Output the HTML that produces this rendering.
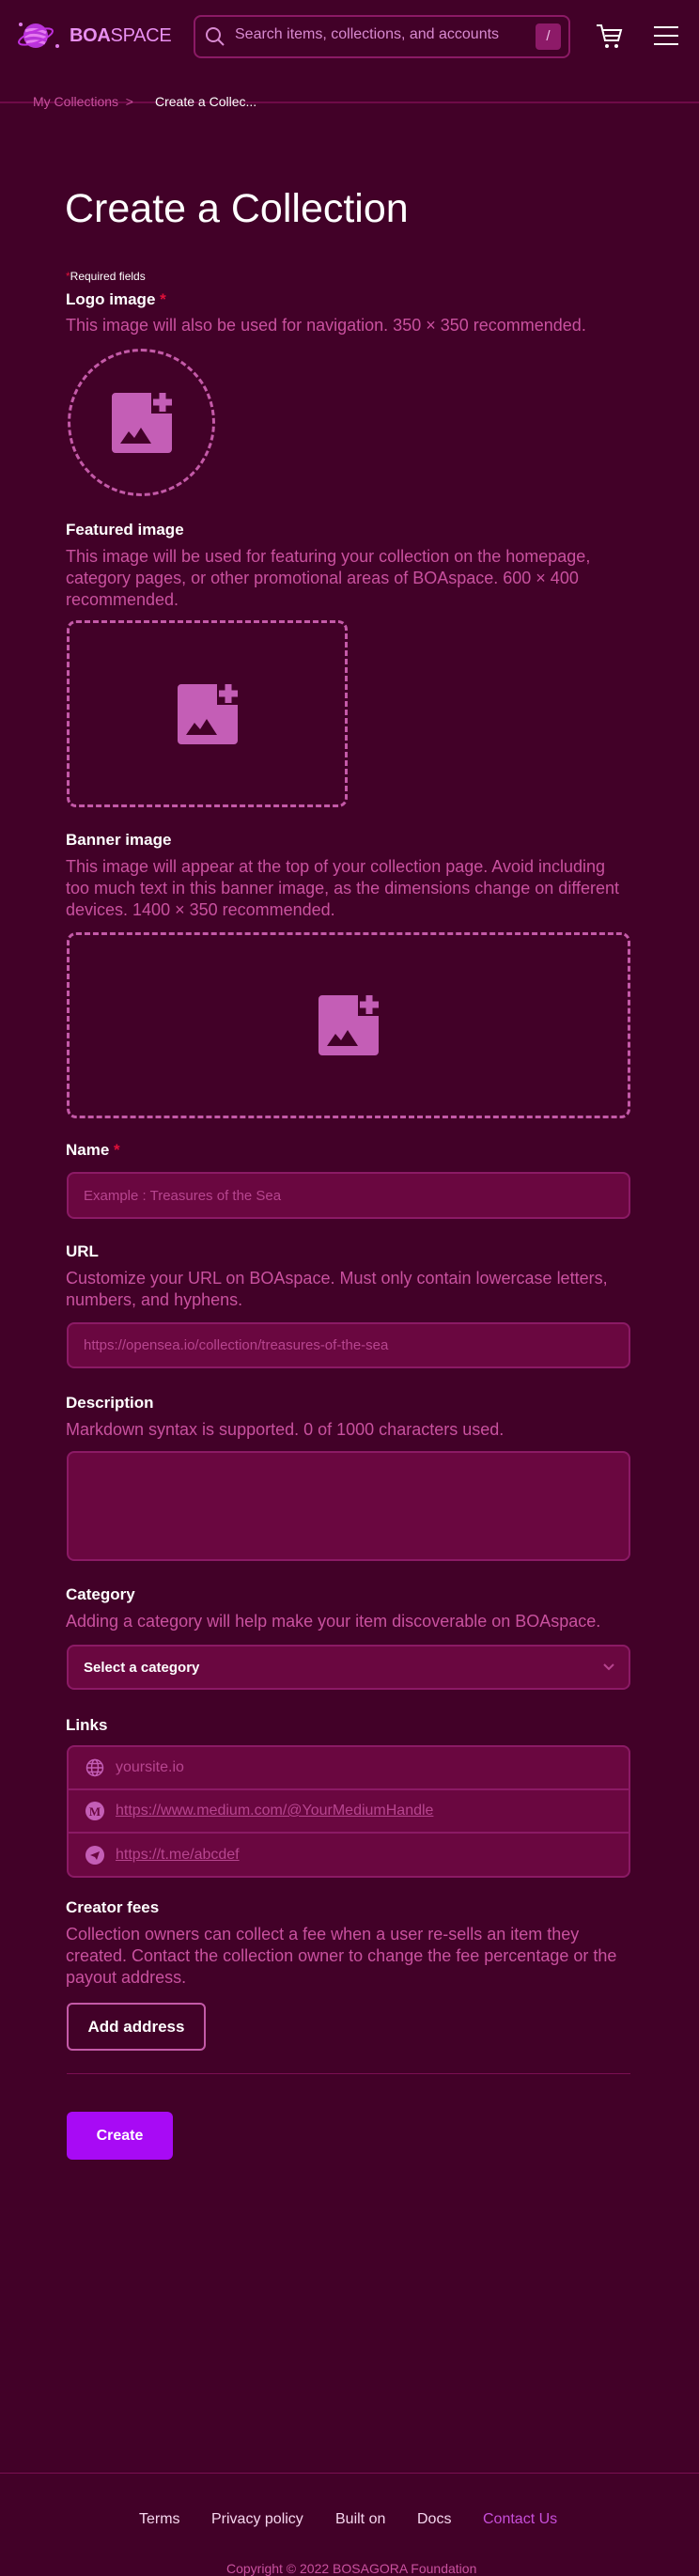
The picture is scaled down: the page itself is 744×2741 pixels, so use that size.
<!DOCTYPE html>
<html><head><meta charset="utf-8"><style>
*{box-sizing:border-box;margin:0;padding:0}
body{width:744px;height:2740px;background:#420128;font-family:"Liberation Sans",sans-serif;position:relative;overflow:hidden;color:#fff}
.a{position:absolute}
.lbl{position:absolute;left:70px;font-size:17px;font-weight:600;color:#fff;line-height:20px}
.lbl b{color:#e0103a;font-weight:600}
.desc{position:absolute;left:70px;font-size:18px;color:#c9519f;line-height:23px;white-space:nowrap}
.inp{position:absolute;left:71px;width:600px;background:#6a0740;border:2px solid #8b1a65;border-radius:8px;font-size:15px;color:#b7458f;padding-left:16px;display:flex;align-items:center}
.dash{position:absolute;border:3px dashed #c45aa8;border-radius:10px;display:flex;align-items:center;justify-content:center}
.row{height:46px;display:flex;align-items:center;border-bottom:2px solid #8b1a65;padding-left:18px;font-size:16px;color:#b7458f}
.row:last-child{border-bottom:none}
.row span{margin-left:12px}
.u{text-decoration:underline}
</style></head><body>
<div class="a" style="left:18px;top:22px;width:48px;height:32px">
<svg width="48" height="32" viewBox="0 0 48 32"><circle cx="20" cy="16" r="13" fill="#b835d8"/><path d="M9 11 q10 -4 22 2 M8 17 q12 -4 24 2 M10 23 q10 -3 20 1" stroke="#e67bf0" stroke-width="3" fill="none"/><ellipse cx="20" cy="17" rx="19" ry="6" fill="none" stroke="#c030e0" stroke-width="2" transform="rotate(-20 20 17)"/><circle cx="4" cy="4" r="2" fill="#e07be8"/><circle cx="43" cy="27" r="2" fill="#e07be8"/></svg></div>
<div class="a" style="left:74px;top:27px;font-size:20px;color:#e88ff0;letter-spacing:-0.3px"><b>BOA</b>SPACE</div>
<div class="a" style="left:206px;top:16px;width:401px;height:46px;border:2px solid #8b1a65;border-radius:8px"></div>
<svg class="a" style="left:218px;top:28px" width="22" height="22" viewBox="0 0 22 22"><circle cx="9" cy="9" r="7" stroke="#d88ad0" stroke-width="2" fill="none"/><path d="M14 14l6 6" stroke="#d88ad0" stroke-width="2"/></svg>
<div class="a" style="left:250px;top:28px;font-size:16px;color:#d88ad0">Search items, collections, and accounts</div>
<div class="a" style="left:570px;top:25px;width:27px;height:28px;background:#8d1a68;border-radius:4px;color:#f0c0e8;font-size:15px;text-align:center;line-height:28px">/</div>
<svg class="a" style="left:634px;top:24px" width="30" height="30" viewBox="0 0 30 30"><path d="M1 3h5l4 16h14l3-11H8" stroke="#fff" stroke-width="2" fill="none"/><path d="M10 14h15" stroke="#fff" stroke-width="2"/><circle cx="12" cy="25" r="2" fill="#fff"/><circle cx="22" cy="25" r="2" fill="#fff"/></svg>
<svg class="a" style="left:696px;top:27px" width="26" height="22"><path d="M0 2h26M0 11h26M0 20h26" stroke="#fff" stroke-width="2"/></svg>
<div class="a" style="left:0;top:108px;width:744px;height:2px;background:#6e0a48"></div>
<div class="a" style="left:35px;top:100px;font-size:14px;color:#c9519f">My Collections &nbsp;&gt;</div>
<div class="a" style="left:165px;top:100px;font-size:14px;color:#fff">Create a Collec...</div>

<div class="a" style="left:69px;top:198px;font-size:43px;font-weight:500">Create a Collection</div>
<div class="a" style="left:70px;top:287px;font-size:12px;color:#fff"><span style="color:#e0103a">*</span>Required fields</div>

<div class="lbl" style="top:309px">Logo image <b>*</b></div>
<div class="desc" style="top:335px">This image will also be used for navigation. 350 × 350 recommended.</div>
<div class="dash" style="left:72px;top:371px;width:157px;height:157px;border-radius:50%"><svg width="64" height="64" viewBox="0 0 64 64"><path d="M4 0h38v22h22v38a4 4 0 0 1-4 4H4a4 4 0 0 1-4-4V4a4 4 0 0 1 4-4z" fill="#c45eb6"/><path d="M50.5 0h7v6.5H64v7h-6.5V20h-7v-6.5H44v-7h6.5z" fill="#c45eb6"/><path d="M9 54l9-13 6 7 7-11 11 17z" fill="#420128"/></svg></div>

<div class="lbl" style="top:554px">Featured image</div>
<div class="desc" style="top:581px">This image will be used for featuring your collection on the homepage,<br>category pages, or other promotional areas of BOAspace. 600 × 400<br>recommended.</div>
<div class="dash" style="left:71px;top:660px;width:299px;height:199px"><svg width="64" height="64" viewBox="0 0 64 64"><path d="M4 0h38v22h22v38a4 4 0 0 1-4 4H4a4 4 0 0 1-4-4V4a4 4 0 0 1 4-4z" fill="#c45eb6"/><path d="M50.5 0h7v6.5H64v7h-6.5V20h-7v-6.5H44v-7h6.5z" fill="#c45eb6"/><path d="M9 54l9-13 6 7 7-11 11 17z" fill="#420128"/></svg></div>

<div class="lbl" style="top:884px">Banner image</div>
<div class="desc" style="top:911px">This image will appear at the top of your collection page. Avoid including<br>too much text in this banner image, as the dimensions change on different<br>devices. 1400 × 350 recommended.</div>
<div class="dash" style="left:71px;top:992px;width:600px;height:198px"><svg width="64" height="64" viewBox="0 0 64 64"><path d="M4 0h38v22h22v38a4 4 0 0 1-4 4H4a4 4 0 0 1-4-4V4a4 4 0 0 1 4-4z" fill="#c45eb6"/><path d="M50.5 0h7v6.5H64v7h-6.5V20h-7v-6.5H44v-7h6.5z" fill="#c45eb6"/><path d="M9 54l9-13 6 7 7-11 11 17z" fill="#420128"/></svg></div>

<div class="lbl" style="top:1214px">Name <b>*</b></div>
<div class="inp" style="top:1247px;height:50px">Example : Treasures of the Sea</div>

<div class="lbl" style="top:1322px">URL</div>
<div class="desc" style="top:1349px">Customize your URL on BOAspace. Must only contain lowercase letters,<br>numbers, and hyphens.</div>
<div class="inp" style="top:1407px;height:49px">https://opensea.io/collection/treasures-of-the-sea</div>

<div class="lbl" style="top:1483px">Description</div>
<div class="desc" style="top:1510px">Markdown syntax is supported. 0 of 1000 characters used.</div>
<div class="inp" style="top:1544px;height:117px"></div>

<div class="lbl" style="top:1687px">Category</div>
<div class="desc" style="top:1714px">Adding a category will help make your item discoverable on BOAspace.</div>
<div class="inp" style="top:1750px;height:48px;color:#fff;font-weight:600;font-size:15px;justify-content:space-between;padding-right:14px">Select a category<svg width="14" height="10"><path d="M2 2l5 5 5-5" stroke="#b7458f" stroke-width="2" fill="none"/></svg></div>

<div class="lbl" style="top:1826px">Links</div>
<div class="inp" style="top:1857px;height:141px;display:block;padding:0">
<div class="row"><svg width="20" height="20" viewBox="0 0 20 20" fill="none" stroke="#c45eb6" stroke-width="1.5"><circle cx="10" cy="10" r="8.5"/><ellipse cx="10" cy="10" rx="3.5" ry="8.5"/><path d="M1.5 10h17M3 5.5h14M3 14.5h14"/></svg><span>yoursite.io</span></div>
<div class="row"><svg width="20" height="20"><circle cx="10" cy="10" r="10" fill="#c45eb6"/><text x="10" y="15" font-size="13" font-weight="bold" text-anchor="middle" fill="#6a0740" font-family="Liberation Serif">M</text></svg><span class="u">https://www.medium.com/@YourMediumHandle</span></div>
<div class="row"><svg width="20" height="20"><circle cx="10" cy="10" r="10" fill="#c45eb6"/><path d="M5 10l10-4-3 9-2-3z" fill="#6a0740"/></svg><span class="u">https://t.me/abcdef</span></div>
</div>

<div class="lbl" style="top:2020px">Creator fees</div>
<div class="desc" style="top:2047px">Collection owners can collect a fee when a user re-sells an item they<br>created. Contact the collection owner to change the fee percentage or the<br>payout address.</div>
<div class="a" style="left:71px;top:2131px;width:148px;height:51px;border:2px solid #c45aa8;border-radius:6px;font-size:17px;font-weight:600;text-align:center;line-height:47px">Add address</div>
<div class="a" style="left:71px;top:2206px;width:600px;height:1px;background:#7a0f52"></div>
<div class="a" style="left:71px;top:2247px;width:113px;height:51px;background:#a80af5;border-radius:6px;font-size:16px;font-weight:600;text-align:center;line-height:51px">Create</div>

<div class="a" style="left:0;top:2631px;width:744px;height:1px;background:#7a0f52"></div>
<div class="a" style="left:148px;top:2672px;font-size:16px;color:#f5d5ee">Terms</div>
<div class="a" style="left:225px;top:2672px;font-size:16px;color:#f5d5ee">Privacy policy</div>
<div class="a" style="left:357px;top:2672px;font-size:16px;color:#f5d5ee">Built on</div>
<div class="a" style="left:444px;top:2672px;font-size:16px;color:#f5d5ee">Docs</div>
<div class="a" style="left:514px;top:2672px;font-size:16px;color:#c64ed8">Contact Us</div>
<div class="a" style="left:241px;top:2725px;font-size:14px;color:#c9519f">Copyright © 2022 BOSAGORA Foundation</div>
</body></html>
